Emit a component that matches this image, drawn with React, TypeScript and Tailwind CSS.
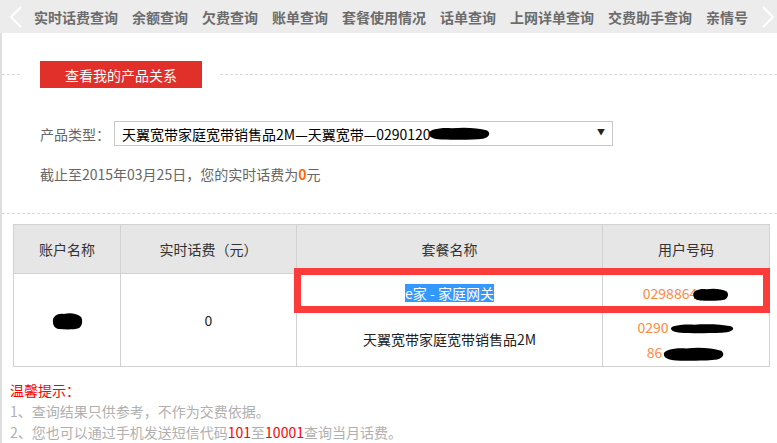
import React from "react";

const navItems = [
  "实时话费查询",
  "余额查询",
  "欠费查询",
  "账单查询",
  "套餐使用情况",
  "话单查询",
  "上网详单查询",
  "交费助手查询",
  "亲情号",
];

function Blot({ w, h, className = "" }: { w: number; h: number; className?: string }) {
  return (
    <svg width={w} height={h} viewBox="0 0 100 40" preserveAspectRatio="none" className={"inline-block align-middle " + className}>
      <path d="M6 22 C4 10 22 4 40 6 C58 3 80 4 94 12 C100 18 98 30 88 34 C70 38 45 37 25 36 C12 35 7 30 6 22 Z" fill="#000" />
    </svg>
  );
}

function Chevron({ dir }: { dir: "left" | "right" }) {
  return (
    <svg width="14" height="22" viewBox="0 0 14 22" className="shrink-0">
      <path
        d={dir === "left" ? "M12 1 L2 11 L12 21" : "M2 1 L12 11 L2 21"}
        fill="none"
        stroke="#fff"
        strokeWidth="2"
      />
    </svg>
  );
}

export default function App() {
  return (
    <div
      className="w-[777px] h-[443px] overflow-hidden bg-white text-[14px]"
      style={{ fontFamily: '"Microsoft YaHei", "Noto Sans CJK SC", sans-serif' }}
    >
      {/* top tabs */}
      <nav className="h-[33px] bg-[#ececec] flex items-center pl-[9px] pr-[2px]">
        <Chevron dir="left" />
        <div className="flex items-center gap-[14px] ml-[11px] flex-1">
          {navItems.map((t) => (
            <span key={t} className="font-bold text-[#6b6b6b] leading-none whitespace-nowrap">
              {t}
            </span>
          ))}
        </div>
        <Chevron dir="right" />
      </nav>

      <div className="border-l-2 border-[#dedede] h-[410px]">
        {/* section title */}
        <div className="flex items-center pt-[28px]">
          <div className="w-[18px] border-t border-dashed border-[#d9d9d9]" />
          <div className="ml-[20px] w-[162px] h-[27px] bg-[#e1302a] text-white flex items-center justify-center leading-none">
            查看我的产品关系
          </div>
          <div className="ml-[18px] flex-1 border-t border-dashed border-[#d9d9d9]" />
        </div>

        <div className="flex items-center mt-[33px] ml-[38px]">
          <span className="w-[74px] text-[#666] leading-none">产品类型：</span>
          <div className="w-[499px] h-[25px] border border-[#c8c8c8] flex items-center pl-[7px] pr-[7px]">
            <span className="text-black leading-none whitespace-nowrap">
              天翼宽带家庭宽带销售品2M—天翼宽带—0290120
            </span>
            <Blot w={66} h={15} className="-ml-[6px]" />
            <span className="ml-auto text-[8px] text-[#222] leading-none -mt-[3px]">▼</span>
          </div>
        </div>

        <p className="mt-[18px] ml-[38px] leading-[20px] text-[#666]">
          截止至2015年03月25日，您的实时话费为<span className="text-[#ff6a00] font-bold">0</span>元
        </p>

        <div className="mt-[29px] border-t border-dashed border-[#d9d9d9]" />

        {/* result table */}
        <div className="relative ml-[11px] mt-[10px] w-[757px]">
          <table className="w-[757px] border-collapse text-center">
            <colgroup>
              <col className="w-[107px]" />
              <col className="w-[176px]" />
              <col className="w-[306px]" />
              <col className="w-[167px]" />
            </colgroup>
            <thead>
              <tr className="h-[49px] bg-[#e6e6e6] text-[#333]">
                <th className="border border-[#d2d2d2] font-normal">账户名称</th>
                <th className="border border-[#d2d2d2] font-normal">实时话费（元）</th>
                <th className="border border-[#d2d2d2] font-normal">套餐名称</th>
                <th className="border border-[#d2d2d2] font-normal">用户号码</th>
              </tr>
            </thead>
            <tbody className="text-[#222]">
              <tr className="h-[39px]">
                <td rowSpan={2} className="border border-[#d2d2d2]">
                  <Blot w={32} h={20} />
                </td>
                <td rowSpan={2} className="border border-[#d2d2d2]">0</td>
                <td className="border border-[#d2d2d2]">
                  <span className="bg-[#3399ff] text-white leading-[18px] inline-block">e家 - 家庭网关</span>
                </td>
                <td className="border border-[#d2d2d2] text-[#ff8a3d] whitespace-nowrap">
                  0298864<Blot w={38} h={15} className="-ml-[6px]" />
                </td>
              </tr>
              <tr className="h-[54px]">
                <td className="border border-[#d2d2d2]">天翼宽带家庭宽带销售品2M</td>
                <td className="border border-[#d2d2d2] text-[#ff8a3d] leading-[25px] whitespace-nowrap">
                  <div>
                    0290<Blot w={68} h={11} className="-ml-[2px]" />
                  </div>
                  <div>
                    86<Blot w={65} h={16} className="-ml-[2px]" />
                  </div>
                </td>
              </tr>
            </tbody>
          </table>
          {/* annotation box */}
          <div className="absolute left-[281px] top-[44px] w-[476px] h-[45px] border-[7px] border-[#fc3b3b]" />
        </div>

        <div className="mt-[13px] ml-[8px] leading-[21px]">
          <p className="text-[#ff0000]">温馨提示：</p>
          <p className="text-[#b0b0b0]">1、查询结果只供参考，不作为交费依据。</p>
          <p className="text-[#b0b0b0]">
            2、您也可以通过手机发送短信代码<span className="text-[#ff0000]">101</span>至
            <span className="text-[#ff0000]">10001</span>查询当月话费。
          </p>
        </div>
      </div>
    </div>
  );
}
